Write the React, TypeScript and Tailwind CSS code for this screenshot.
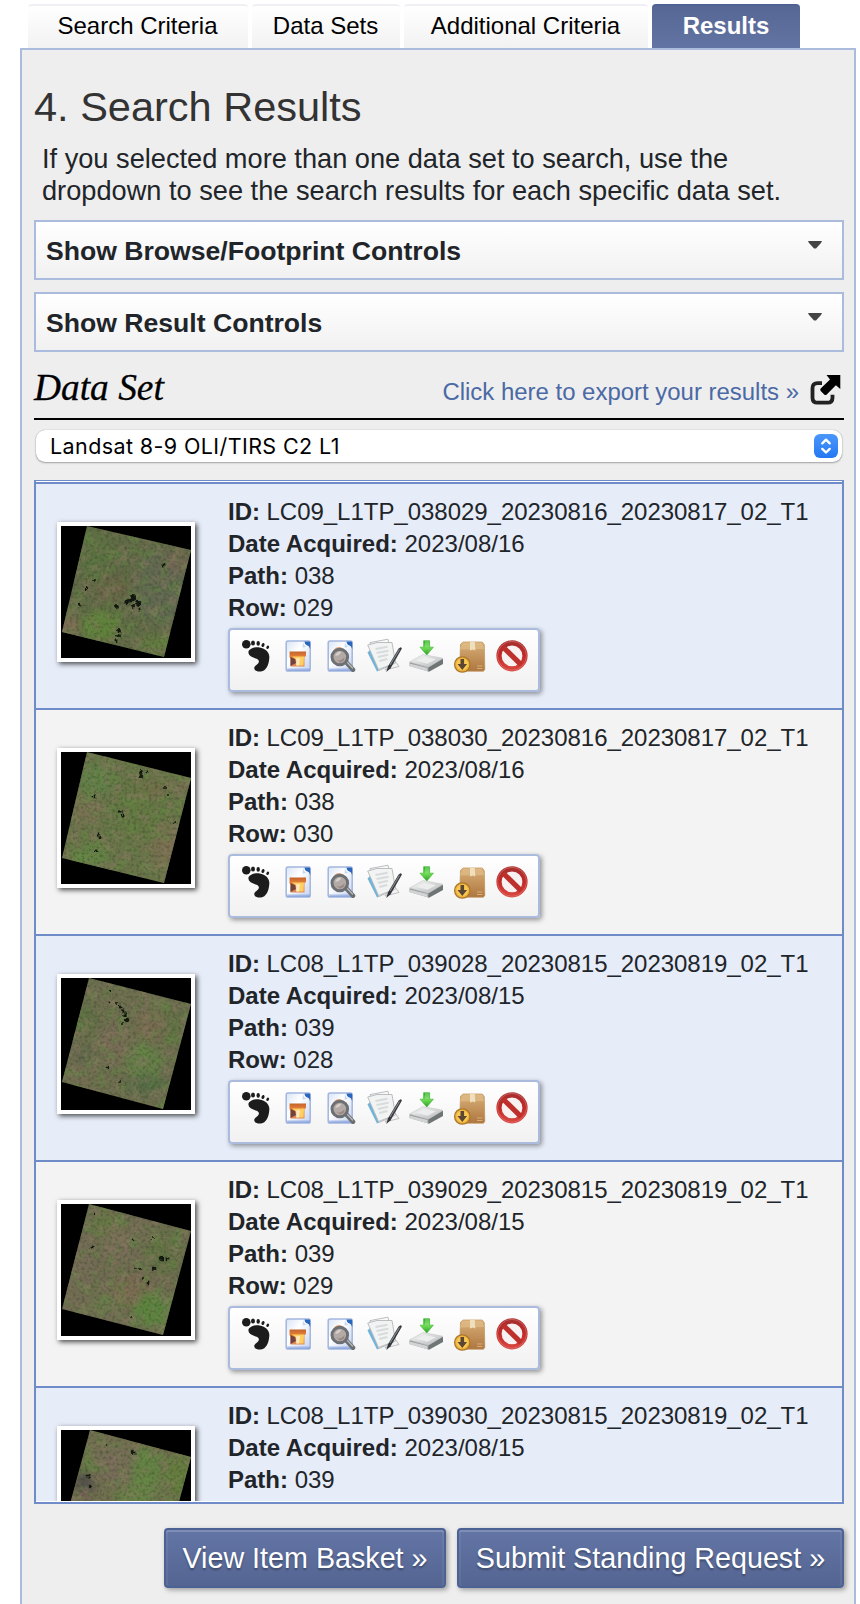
import React from "react";

type Blob = [number, number, number, number, string, number];

interface Scene {
  id: string;
  date: string;
  path: string;
  row?: string;
  seed: number;
  corners: string;
  base: string;
  blobs: Blob[];
  dark: [number, number, number][];
}

const scenes: Scene[] = [
  {
    id: "LC09_L1TP_038029_20230816_20230817_02_T1",
    date: "2023/08/16",
    path: "038",
    row: "029",
    seed: 3,
    corners: "26,0 130,24 103,131 1,106",
    base: "#626b48",
    blobs: [
      [35, 28, 16, 22, "#587740", 0.6],
      [100, 62, 26, 38, "#636858", 0.6],
      [115, 35, 14, 12, "#7a6558", 0.7],
      [50, 62, 18, 12, "#6d6149", 0.7],
      [40, 100, 20, 16, "#618a38", 0.7],
      [8, 100, 10, 12, "#86705a", 0.8],
      [95, 118, 18, 10, "#65823e", 0.6],
    ],
    dark: [[72, 72, 3], [66, 76, 2.5], [77, 77, 3], [72, 80, 2], [69, 74, 2.5], [56, 80, 2], [78, 83, 1.5], [102, 39, 1.5], [58, 105, 2], [58, 110, 2], [55, 115, 1.5], [25, 63, 1.2], [19, 79, 1.2], [33, 55, 1]],
  },
  {
    id: "LC09_L1TP_038030_20230816_20230817_02_T1",
    date: "2023/08/16",
    path: "038",
    row: "030",
    seed: 11,
    corners: "26,0 130,26 103,131 1,106",
    base: "#6a754a",
    blobs: [
      [35, 28, 18, 16, "#608448", 0.7],
      [24, 58, 16, 16, "#7b7254", 0.8],
      [105, 95, 14, 26, "#806f55", 0.8],
      [78, 60, 26, 30, "#5f7c3e", 0.5],
      [90, 38, 16, 10, "#7d6a50", 0.5],
      [30, 104, 18, 10, "#629044", 0.6],
      [122, 32, 9, 9, "#806c5a", 0.7],
    ],
    dark: [[80, 20, 2], [80, 24, 2], [86, 21, 1.4], [59, 60, 1.8], [62, 64, 1.6], [37, 82, 1.8], [39, 85, 1.6], [33, 45, 1.4], [35, 99, 1.4], [113, 71, 1.1], [104, 36, 1], [107, 43, 1]],
  },
  {
    id: "LC08_L1TP_039028_20230815_20230819_02_T1",
    date: "2023/08/15",
    path: "039",
    row: "028",
    seed: 21,
    corners: "28,0 130,26 102,131 1,104",
    base: "#6e6e50",
    blobs: [
      [26, 42, 12, 14, "#58703e", 0.7],
      [52, 64, 14, 20, "#7e6b5a", 0.7],
      [90, 48, 16, 16, "#7e6b54", 0.6],
      [83, 82, 20, 16, "#648547", 0.7],
      [84, 106, 20, 9, "#4d6c44", 0.8],
      [24, 78, 12, 9, "#5b624e", 0.6],
      [112, 50, 10, 18, "#5b7640", 0.6],
      [18, 96, 14, 8, "#7d6e5a", 0.6],
    ],
    dark: [[49, 12, 1.2], [49, 24, 1.4], [55, 25, 1], [59, 29, 1.5], [62, 33, 1.8], [64, 37, 1.8], [66, 42, 2.2], [61, 45, 1], [47, 90, 1.2], [59, 103, 1]],
  },
  {
    id: "LC08_L1TP_039029_20230815_20230819_02_T1",
    date: "2023/08/15",
    path: "039",
    row: "029",
    seed: 35,
    corners: "28,0 130,27 102,131 1,105",
    base: "#716c53",
    blobs: [
      [48, 21, 18, 12, "#667c42", 0.7],
      [56, 38, 14, 16, "#7e6d5d", 0.7],
      [104, 48, 18, 24, "#5b743d", 0.6],
      [72, 88, 22, 16, "#7f6a52", 0.7],
      [92, 106, 20, 18, "#588a3b", 0.8],
      [44, 100, 14, 9, "#67834a", 0.6],
      [20, 58, 12, 26, "#786a5a", 0.6],
    ],
    dark: [[101, 54, 2.4], [93, 64, 2.4], [106, 56, 1.4], [31, 43, 1.5], [33, 9, 1.3], [75, 65, 1], [79, 65, 1], [81, 74, 1], [87, 79, 1.4], [72, 36, 1.4], [92, 34, 1], [70, 114, 1]],
  },
  {
    id: "LC08_L1TP_039030_20230815_20230819_02_T1",
    date: "2023/08/15",
    path: "039",
    seed: 47,
    corners: "29,0 130,27 102,131 1,104",
    base: "#716f50",
    blobs: [
      [55, 35, 20, 20, "#7a6b5c", 0.8],
      [85, 45, 16, 28, "#5f8a40", 0.7],
      [118, 45, 14, 22, "#62803a", 0.8],
      [23, 54, 11, 14, "#524f4a", 0.9],
      [28, 34, 7, 10, "#668044", 0.7],
      [20, 72, 14, 12, "#7a6456", 0.8],
      [68, 66, 14, 8, "#628b42", 0.7],
    ],
    dark: [[72, 22, 2.3], [74, 23, 1.5], [46, 15, 1], [27, 46, 1.6], [29, 56, 1.2]],
  },
];

function Thumb({ scene }: { scene: Scene }) {
  const k = `s${scene.seed}`;
  return (
    <svg width="130" height="132" viewBox="0 0 130 132" className="block bg-black">
      <defs>
        <clipPath id={`${k}c`}>
          <polygon points={scene.corners} />
        </clipPath>
        <filter id={`${k}b`} x="-50%" y="-50%" width="200%" height="200%" colorInterpolationFilters="sRGB">
          <feGaussianBlur stdDeviation="5" />
        </filter>
        <filter id={`${k}s`} x="-20%" y="-20%" width="140%" height="140%" colorInterpolationFilters="sRGB">
          <feTurbulence type="fractalNoise" baseFrequency="0.25" numOctaves={2} seed={scene.seed} result="t" />
          <feDisplacementMap in="SourceGraphic" in2="t" scale="5" xChannelSelector="R" yChannelSelector="G" />
          <feGaussianBlur stdDeviation="0.7" />
        </filter>
        <filter id={`${k}n`} x="0" y="0" width="100%" height="100%" colorInterpolationFilters="sRGB">
          <feTurbulence type="fractalNoise" baseFrequency="0.33" numOctaves={2} seed={scene.seed} />
          <feColorMatrix values="0 0 0 0 0.17  0 0 0 0 0.24  0 0 0 0 0.13  3 0 0 0 -1.4" />
        </filter>
        <filter id={`${k}g`} x="0" y="0" width="100%" height="100%" colorInterpolationFilters="sRGB">
          <feTurbulence type="fractalNoise" baseFrequency="0.09" numOctaves={4} seed={scene.seed + 5} />
          <feColorMatrix values="0 0 0 0 0.4  0 0 0 0 0.55  0 0 0 0 0.27  0 4 0 0 -1.9" />
        </filter>
        <filter id={`${k}r`} x="0" y="0" width="100%" height="100%" colorInterpolationFilters="sRGB">
          <feTurbulence type="fractalNoise" baseFrequency="0.1" numOctaves={4} seed={scene.seed + 9} />
          <feColorMatrix values="0 0 0 0 0.56  0 0 0 0 0.49  0 0 0 0 0.4  0 0 4 0 -1.9" />
        </filter>
      </defs>
      <rect width="130" height="132" fill="#000" />
      <g clipPath={`url(#${k}c)`}>
        <rect width="130" height="132" fill={scene.base} />
        <g filter={`url(#${k}b)`}>
          {scene.blobs.map(([x, y, rx, ry, fill, o], i) => (
            <ellipse key={i} cx={x} cy={y} rx={rx} ry={ry} fill={fill} opacity={o} />
          ))}
        </g>
        <rect width="130" height="132" filter={`url(#${k}g)`} className="opacity-45" />
        <rect width="130" height="132" filter={`url(#${k}r)`} className="opacity-40" />
        <rect width="130" height="132" filter={`url(#${k}n)`} className="opacity-35" />
        <g filter={`url(#${k}s)`}>
          {scene.dark.map(([x, y, r], i) => (
            <circle key={i} cx={x} cy={y} r={r} fill="#11180f" />
          ))}
        </g>
      </g>
    </svg>
  );
}

function IconDefs() {
  return (
    <svg width="0" height="0" className="absolute">
      <defs>
        <linearGradient id="page" x1="0" y1="0" x2="1" y2="1">
          <stop offset="0" stopColor="#d9e4f6" />
          <stop offset="0.4" stopColor="#ffffff" />
          <stop offset="1" stopColor="#c3d2ef" />
        </linearGradient>
        <linearGradient id="pic" x1="0" y1="0" x2="0" y2="1">
          <stop offset="0" stopColor="#c4622c" />
          <stop offset="0.45" stopColor="#ee8a3c" />
          <stop offset="1" stopColor="#e08a58" />
        </linearGradient>
        <linearGradient id="arrow" x1="0" y1="0" x2="0" y2="1">
          <stop offset="0" stopColor="#2fa828" />
          <stop offset="0.5" stopColor="#6fdc55" />
          <stop offset="1" stopColor="#2e9c2a" />
        </linearGradient>
        <linearGradient id="carton" x1="0" y1="0" x2="0" y2="1">
          <stop offset="0" stopColor="#d9b078" />
          <stop offset="1" stopColor="#ae7640" />
        </linearGradient>
        <linearGradient id="stop" x1="0" y1="0" x2="0" y2="1">
          <stop offset="0" stopColor="#a83030" />
          <stop offset="0.5" stopColor="#c02a27" />
          <stop offset="1" stopColor="#d8453f" />
        </linearGradient>
        <linearGradient id="drive" x1="0" y1="0" x2="1" y2="1">
          <stop offset="0" stopColor="#fafafa" />
          <stop offset="1" stopColor="#b4b6b8" />
        </linearGradient>
      </defs>
    </svg>
  );
}

function Glyph({ children }: { children: React.ReactNode }) {
  return (
    <svg width="32" height="32" viewBox="0 0 32 32" className="block shrink-0 overflow-visible blur-[0.7px]">
      {children}
    </svg>
  );
}

function Sheet() {
  return (
    <>
      <rect x="3.200" y="1" width="24" height="30" rx="1.800" fill="url(#page)" stroke="#a3b6de" strokeWidth="1.500" />
      <path d="M4 28.500H27v2.400H4.500z" fill="#7b9ada" opacity="0.600" />
      <path d="M21.500 1.500h4.700q1 0 1 1.300V9q-1-3-2.700-3.400Q21.800 5 21.500 1.500z" fill="#2a66bd" />
      <path d="M20 1.500q.8 4.800 3.600 5.300l-4 .8z" fill="#c3d7f3" />
    </>
  );
}

function Toolbar() {
  return (
    <div className="flex h-16 w-[312px] items-start gap-[10.66px] rounded border-2 border-[#aabbdd] bg-linear-to-b from-white to-[#f1f1f1] pt-[10px] pl-[10px] shadow-[2px_2px_5px_rgba(0,0,0,0.4)]">
      <Glyph>
        <g fill="#1c1c1c">
          <circle cx="6.300" cy="4.300" r="4.300" />
          <ellipse cx="13" cy="3" rx="2" ry="2.500" />
          <ellipse cx="18.200" cy="3.400" rx="1.700" ry="2.400" />
          <ellipse cx="23" cy="5" rx="1.500" ry="2.100" transform="rotate(20 23 5)" />
          <ellipse cx="27.700" cy="7.300" rx="1.300" ry="1.800" transform="rotate(30 27.7 7.300)" />
          <path d="M8.400 12.500C8.400 9 14 6.800 19.500 7.400 26 8.400 29.800 12.500 29.300 18c-.4 7-3.300 13-8.300 13.500-4.500.2-7.700-1.700-6.500-4.500 1.500-2.500 5-3.500 4.300-6.300C17.500 17.300 9 18.500 8.400 12.500z" />
        </g>
      </Glyph>
      <Glyph>
        <Sheet />
        <path d="M6.600 11.500h16.400v5h-1.500v10h-14v-7.500l-1-2z" fill="url(#pic)" />
        <path d="M9 16.500h12l-.5 9H13.500l1-5z" fill="#ffcf62" />
        <path d="M13 18.500l4-.5-1 7.500h-3z" fill="#fff6e2" opacity="0.700" />
        <path d="M7.500 17l4.500 2 1 4-5.500 3z" fill="#70453f" />
      </Glyph>
      <Glyph>
        <Sheet />
        <circle cx="14" cy="13" r="6" fill="#e8a070" />
        <path d="M21.500 22.500L28 29.700" stroke="#6c6f72" strokeWidth="4.600" strokeLinecap="round" />
        <path d="M22 22l5.500 6" stroke="#b9bcbe" strokeWidth="1.200" strokeLinecap="round" />
        <circle cx="14.800" cy="17" r="7.800" fill="#b4aaa5" stroke="#6c6f73" strokeWidth="3" />
        <path d="M10.300 16c.6-3 3-4.500 6-4.200-1 2.700-3 4-6 4.200z" fill="#d6cfca" />
        <path d="M11.500 20c3 1 6 0 8-3l-.5 3.500-3.500 2.200z" fill="#9b8883" />
      </Glyph>
      <Glyph>
        <path d="M-.5 12.500L4 8l8 22-3 1.500z" fill="#70b4da" />
        <path d="M25 18l6 8.500L17 30z" fill="#f2f2f2" stroke="#b4b4b4" strokeWidth="0.800" />
        <path d="M2 2.600L20-.8 25.500 24 11 30.500z" fill="#fafafa" stroke="#b9bdc0" strokeWidth="1" />
        <path d="M-.3 5L9 2.500 24 2.500l3.500 20.500-17 6.500z" fill="#f2f3f3" stroke="#b4b6b8" strokeWidth="0.900" />
        <path d="M7.500 9l12-2.300M8.500 13l12-2.300M10 17l10-2.300M11.300 21l8-2" stroke="#d8dbdc" strokeWidth="2" />
        <path d="M18.300 32l1.600-5.500L30.500 8.700q3-3 3.300 0L22.600 28.200z" fill="#34383c" />
        <path d="M22 25L31.500 9.500" stroke="#84898e" strokeWidth="1.100" />
      </Glyph>
      <Glyph>
        <path d="M-1.500 22.500L12.500 15 32 19v4.500L17.300 31.500-1.500 26z" fill="#969a9b" />
        <path d="M-1.500 22L12 14.500 32 18.300 17.500 27.300z" fill="url(#drive)" stroke="#c6c7c8" strokeWidth="0.600" />
        <path d="M5 20.800L13 17l12 2.200-8.500 4.600z" fill="#eceded" />
        <path d="M17.500 27.500L32 19v5l-14.500 8z" fill="#6f7475" />
        <path d="M-1.500 23.500l18 4.500v3.200l-18-5z" fill="#d2d4d4" />
        <path d="M12.600.7h6v6.500h3.800L15.800 15 9 7.200h3.600z" fill="url(#arrow)" stroke="#48bb3b" strokeWidth="0.700" />
        <path d="M15 1v6M17 1v6" stroke="#b2f09e" strokeWidth="0.700" />
      </Glyph>
      <Glyph>
        <path d="M7.500 4.300L10 2h19.300l2 2.700.5 24.500-1.300 2H9L6.700 29z" fill="url(#carton)" stroke="#bf9157" strokeWidth="0.700" />
        <path d="M7 9.500L9.500 2.500h19.300L31.300 9z" fill="#dfbc88" opacity="0.700" />
        <path d="M17 2h4.800l.5 8.500-2.500-1-2.800 1z" fill="#f0dfbc" />
        <path d="M24 26h5.500M24 28.500h5.500" stroke="#d7ac77" strokeWidth="1" />
        <circle cx="9.300" cy="24.500" r="7.700" fill="#f1b13a" stroke="#aa792c" strokeWidth="1.300" />
        <circle cx="9.300" cy="24.300" r="5.800" fill="#f8ca55" />
        <path d="M7.500 19h3.600v5h3l-4.800 6-4.800-6h3z" fill="#5b4634" />
      </Glyph>
      <Glyph>
        <circle cx="16" cy="15.800" r="13" fill="#f7f1f1" stroke="url(#stop)" strokeWidth="5.200" />
        <path d="M7 7l18 17.600" stroke="#bd302c" strokeWidth="5.200" />
        <circle cx="16" cy="15.800" r="14.500" fill="none" stroke="#e07770" strokeWidth="0.900" opacity="0.700" />
      </Glyph>
    </div>
  );
}

function Accordion({ label }: { label: string }) {
  return (
    <div className="flex h-[60px] items-start justify-between border-2 border-[#aabbdd] bg-linear-to-b from-white to-[#f1f1f1] pt-3 pr-5 pl-[10px]">
      <span className="pt-px text-[26.6px] leading-8 font-bold">{label}</span>
      <svg width="14" height="8" viewBox="0 0 14 8" className="mt-[7px] blur-[0.3px]">
        <path d="M0 0H14L13 2 8 7.600H6L1 2z" fill="#444" />
      </svg>
    </div>
  );
}

function Result({ scene, shaded }: { scene: Scene; shaded: boolean }) {
  return (
    <div className={`flex h-[226px] shrink-0 items-start border-b-2 border-[#6f8cc9] pl-[21px] ${shaded ? "bg-[#e6ecf8]" : "bg-[#f3f3f3]"}`}>
      <div className="mt-[38px] border-4 border-white bg-white shadow-[2px_2px_5px_rgba(0,0,0,0.7)]">
        <Thumb scene={scene} />
      </div>
      <div className="ml-[33px] pt-3 text-2xl leading-8">
        <div className="tracking-[-0.03px] whitespace-nowrap"><b>ID:</b> {scene.id}</div>
        <div><b>Date Acquired:</b> {scene.date}</div>
        <div><b>Path:</b> {scene.path}</div>
        {scene.row && (
          <>
            <div className="mb-1"><b>Row:</b> {scene.row}</div>
            <Toolbar />
          </>
        )}
      </div>
    </div>
  );
}

const tab = "flex h-11 items-center justify-center rounded-t border-t-2 border-[#f0f0f4] bg-linear-to-b from-white to-[#f2f2f2] pr-px pb-0.5 text-black";
const button = "flex h-[60px] items-center justify-center rounded border-2 border-[#4d6294] bg-linear-to-b from-[#6375a5] to-[#546592] pt-0.5 text-[28.7px] text-white shadow-[2px_2px_5px_rgba(0,0,0,0.35),inset_0_2px_0_rgba(255,255,255,0.18),inset_2px_0_0_rgba(255,255,255,0.06),inset_-2px_0_0_rgba(255,255,255,0.06)] [text-shadow:0_2px_2px_rgba(0,0,0,0.3)]";

export default function App() {
  return (
    <div className="h-[1604px] w-[860px] overflow-hidden bg-white pt-1 font-['Liberation_Sans',Arial,sans-serif] text-[#212529]">
      <IconDefs />
      <nav className="ml-7 flex gap-1 text-2xl">
        <div className={`${tab} w-[220px]`}>Search Criteria</div>
        <div className={`${tab} w-[148px]`}>Data Sets</div>
        <div className={`${tab} w-[244px]`}>Additional Criteria</div>
        <div className="flex h-11 w-[148px] items-center justify-center rounded-t border-t-2 border-[#4f6294] bg-linear-to-b from-[#566794] to-[#6274a3] pb-0.5 font-bold text-white">Results</div>
      </nav>
      <main className="ml-5 h-[1558px] w-[836px] border-2 border-b-0 border-[#aabbdd] bg-[#eee] pr-[10px] pl-3">
        <h1 className="pt-8 text-[41.5px] leading-[50px] text-[#333]">4. Search Results</h1>
        <p className="pt-[11px] pl-2 text-[27.2px] leading-8 whitespace-nowrap">
          If you selected more than one data set to search, use the
          <br />
          dropdown to see the search results for each specific data set.
        </p>
        <div className="mt-[13px] flex flex-col gap-3">
          <Accordion label="Show Browse/Footprint Controls" />
          <Accordion label="Show Result Controls" />
        </div>
        <div className="flex h-[68px] items-end justify-between border-b-2 border-black pb-[10px]">
          <h2 className="-mb-0.5 font-['Liberation_Serif','Times_New_Roman',serif] text-[37.4px] leading-[44px] text-black italic [-webkit-text-stroke:0.3px_black]">Data Set</h2>
          <div className="flex items-end gap-[11px] pr-[3px]">
            <a className="text-[23.95px] leading-8 text-[#4a69a5]">Click here to export your results »</a>
            <svg width="31" height="32" viewBox="0 0 31 32" className="mb-[2px] blur-[0.6px]">
              <path d="M12 9.200H7.500q-5 0-5 5v9.500q0 5 5 5h10q5 0 5-5v-3" fill="none" stroke="#222" strokeWidth="3.800" />
              <path d="M16.500 1H30.300V15l-4.400-3.700-9.200 9.200q-1.300 1-2.500 0l-3.500-3.600q-1-1.400 0-2.500L20 5.400z" fill="#000" />
            </svg>
          </div>
        </div>
        <div className="mx-0.5 mt-[10px] flex h-8 items-center justify-between rounded-[9px] bg-white pr-1 pl-[14px] font-[Inter,sans-serif] text-[21.5px] tracking-[0.4px] text-black shadow-[0_0_1px_rgba(0,0,0,0.35),0_1px_2px_rgba(0,0,0,0.3)]">
          <span>Landsat 8-9 OLI/TIRS C2 L1</span>
          <span className="flex size-6 items-center justify-center rounded-md bg-linear-to-b from-[#4a98fb] to-[#2577f3]">
            <svg width="24" height="24" viewBox="0 0 24 24" fill="none" stroke="white" strokeWidth="2.400" strokeLinecap="round" strokeLinejoin="round">
              <path d="M8.300 9.300L12 5.700l3.700 3.600M8.300 14.900L12 18.500l3.700-3.600" />
            </svg>
          </span>
        </div>
        <section className="mt-[18px] flex h-[1024px] flex-col border-x-2 border-t border-b-2 border-[#6f8cc9] bg-white pt-px pb-px">
          <div className="flex min-h-0 flex-1 flex-col overflow-hidden border-t-2 border-[#6f8cc9]">
            {scenes.map((scene, i) => (
              <Result key={scene.id} scene={scene} shaded={i % 2 === 0} />
            ))}
          </div>
        </section>
        <div className="mt-6 flex justify-end gap-[11px]">
          <button className={`${button} w-[282px]`}>View Item Basket »</button>
          <button className={`${button} w-[387px]`}>Submit Standing Request »</button>
        </div>
      </main>
    </div>
  );
}
